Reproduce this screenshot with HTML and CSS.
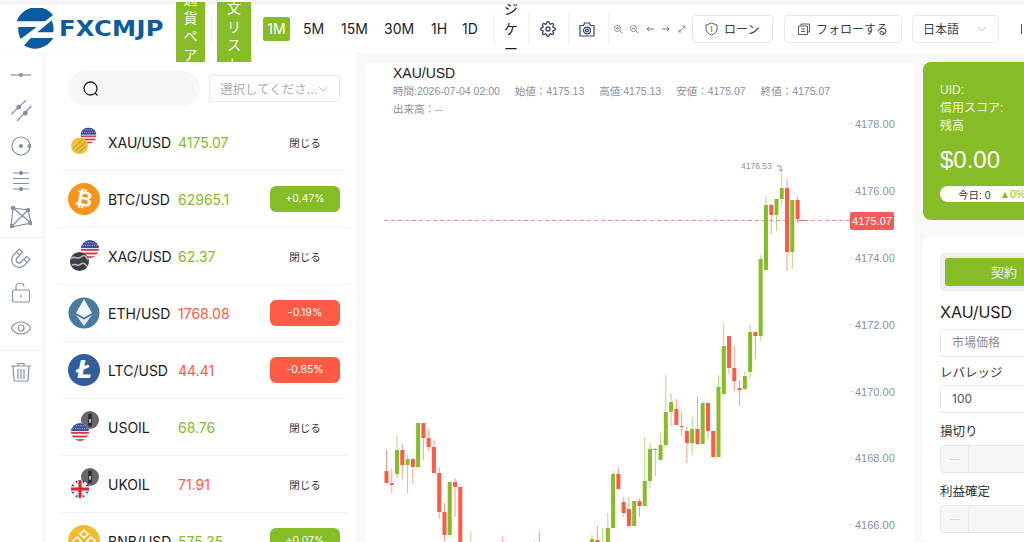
FILE: index.html
```html
<!DOCTYPE html>
<html lang="ja">

<head>
    <meta charset="UTF-8">
    <meta name="viewport" content="width=device-width, initial-scale=1.0">
    <title>FXCMJP</title>
    <link rel="stylesheet" href="styles.css">
</head>

<body>
    <svg class="defs" width="0" height="0">
        <defs>
            <clipPath id="round"><circle cx="10" cy="10" r="10"></circle></clipPath>
            <symbol id="flag-us" viewBox="0 0 20 20">
                <g clip-path="url(#round)">
                    <rect width="20" height="20" fill="#f4f4f6"></rect>
                    <rect y="2" width="20" height="2" fill="#d8384a"></rect>
                    <rect y="6" width="20" height="2" fill="#d8384a"></rect>
                    <rect y="10" width="20" height="2" fill="#d8384a"></rect>
                    <rect y="14" width="20" height="2" fill="#d8384a"></rect>
                    <rect y="18" width="20" height="2" fill="#d8384a"></rect>
                    <rect width="20" height="9" fill="#3f4f9e"></rect>
                    <path d="M3 3h14M2 6h16" stroke="#cfd4ea" stroke-width="1" stroke-dasharray="1 1.5"></path>
                </g>
            </symbol>
            <symbol id="flag-uk" viewBox="0 0 20 20">
                <g clip-path="url(#round)">
                    <rect width="20" height="20" fill="#3b4a94"></rect>
                    <path d="M0 0l20 20M20 0L0 20" stroke="#f4f4f6" stroke-width="4"></path>
                    <path d="M10 0v20M0 10h20" stroke="#f4f4f6" stroke-width="6"></path>
                    <path d="M10 0v20M0 10h20" stroke="#e0242f" stroke-width="3.4"></path>
                </g>
            </symbol>
            <symbol id="gold" viewBox="0 0 20 20">
                <g clip-path="url(#round)">
                    <rect width="20" height="20" fill="#f0c33c"></rect>
                    <path d="M2 13L14 2M5 16L18 5M9 18l9-8" stroke="#c79a2a" stroke-width="1.2"></path>
                    <path d="M0 15c6 5 14 5 20 0v5H0z" fill="#e9e2c4"></path>
                </g>
            </symbol>
            <symbol id="silver" viewBox="0 0 20 20">
                <g clip-path="url(#round)">
                    <rect width="20" height="20" fill="#3d3f42"></rect>
                    <path d="M1 7c4-4 7 2 11-2s6 2 7 3M2 14c3-3 6 2 9-1s5 0 7 2" stroke="#b9bbbe" stroke-width="1.600" fill="none"></path>
                </g>
            </symbol>
            <symbol id="oil" viewBox="0 0 20 20">
                <g clip-path="url(#round)">
                    <rect width="20" height="20" fill="#66676a"></rect>
                    <rect x="8" y="3" width="4" height="14" fill="#2a2b2d"></rect>
                    <rect x="9" y="9" width="2" height="4" fill="#c9cacc"></rect>
                </g>
            </symbol>
        </defs>
    </svg>

    <div class="header">
        <div class="logo">
            <svg class="logo-mark" viewBox="0 0 38 42" fill="#0b5c9e">
                <path d="M.7 13.300A21 21 0 0 1 34 4l3 3-8 6.300z"></path>
                <path d="M2.300 19H20.700L4.700 31A21 21 0 0 1 2.300 19z"></path>
                <path d="M35.700 12.300A21 21 0 0 1 37.300 24.300H21.300z"></path>
                <path d="M14.700 30H37.300A21 21 0 0 1 8 37.500z"></path>
            </svg>
            <span class="logo-text">FXCMJP</span>
        </div>
        <div class="pill-btn pair-btn"><span>通貨ペア</span></div>
        <div class="divider first"></div>
        <div class="pill-btn order-btn"><span>注文リスト</span></div>
        <div class="divider"></div>
        <div class="timeframes">
            <span class="tf active">1M</span>
            <span class="tf">5M</span>
            <span class="tf">15M</span>
            <span class="tf">30M</span>
            <span class="tf">1H</span>
            <span class="tf">1D</span>
        </div>
        <div class="divider tf-end"></div>
        <div class="indicator-btn"><span>インジケーター</span></div>
        <div class="divider"></div>
        <div class="icon-cell gear-cell">
            <svg width="16" height="16" viewBox="0 0 24 24" fill="none" stroke="#34466e" stroke-width="2">
                <circle cx="12" cy="12" r="3"></circle>
                <path d="M19.4 15a1.65 1.65 0 0 0 .33 1.82l.06.06a2 2 0 0 1 0 2.83 2 2 0 0 1-2.83 0l-.06-.06a1.65 1.65 0 0 0-1.82-.33 1.65 1.65 0 0 0-1 1.51V21a2 2 0 0 1-2 2 2 2 0 0 1-2-2v-.09A1.65 1.65 0 0 0 9 19.4a1.65 1.65 0 0 0-1.82.33l-.06.06a2 2 0 0 1-2.83 0 2 2 0 0 1 0-2.83l.06-.06a1.65 1.65 0 0 0 .33-1.82 1.65 1.65 0 0 0-1.51-1H3a2 2 0 0 1-2-2 2 2 0 0 1 2-2h.09A1.65 1.65 0 0 0 4.6 9a1.65 1.65 0 0 0-.33-1.82l-.06-.06a2 2 0 0 1 0-2.83 2 2 0 0 1 2.83 0l.06.06a1.65 1.65 0 0 0 1.82.33H9a1.65 1.65 0 0 0 1-1.51V3a2 2 0 0 1 2-2 2 2 0 0 1 2 2v.09a1.65 1.65 0 0 0 1 1.51 1.65 1.65 0 0 0 1.82-.33l.06-.06a2 2 0 0 1 2.83 0 2 2 0 0 1 0 2.83l-.06.06a1.65 1.65 0 0 0-.33 1.82V9a1.65 1.65 0 0 0 1.51 1H21a2 2 0 0 1 2 2 2 2 0 0 1-2 2h-.09a1.65 1.65 0 0 0-1.51 1z"></path>
            </svg>
        </div>
        <div class="divider"></div>
        <div class="icon-cell camera-cell">
            <svg width="16" height="16" viewBox="0 0 16 16" fill="none" stroke="#34466e" stroke-width="1.2">
                <path d="M1 4.5h3.5L5.5 2h5l1 2.5H15V15H1z" stroke-linejoin="round"></path>
                <circle cx="8" cy="9.5" r="3.4"></circle>
                <circle cx="8" cy="9.5" r="1.4"></circle>
            </svg>
        </div>
        <div class="divider"></div>
        <div class="chart-tools">
            <svg width="8" height="8" viewBox="0 0 8 8" fill="none" stroke="#8a8f99"><circle cx="3.5" cy="3.5" r="3"></circle><path d="M6 6l2 2M2 3.5h3M3.5 2v3"></path></svg>
            <svg width="8" height="8" viewBox="0 0 8 8" fill="none" stroke="#8a8f99"><circle cx="3.5" cy="3.5" r="3"></circle><path d="M6 6l2 2M2 3.5h3"></path></svg>
            <svg width="8" height="8" viewBox="0 0 8 8" fill="none" stroke="#6f7580"><path d="M8 4H1M3 2L1 4l2 2"></path></svg>
            <svg width="8" height="8" viewBox="0 0 8 8" fill="none" stroke="#6f7580"><path d="M0 4h7M5 2l2 2-2 2"></path></svg>
            <svg width="8" height="8" viewBox="0 0 8 8" fill="none" stroke="#8a8f99"><path d="M1 7l6-6M4.5 1H7v2.5M1 4.500V7h2.500"></path></svg>
        </div>
        <div class="head-btn loan-btn">
            <svg width="13" height="14" viewBox="0 0 13 14" fill="none" stroke="#59616e"><path d="M6.500 1l5.500 2v4c0 3-2.500 5-5.500 6C3.500 12 1 10 1 7V3z"></path><path d="M6.500 4v6" stroke="#86bc25" stroke-width="1.500"></path></svg>
            <span>ローン</span>
        </div>
        <div class="head-btn follow-btn">
            <svg width="12" height="12" viewBox="0 0 12 12" fill="none" stroke="#59616e"><path d="M3 3V1h8.500v8H9.500M.5 3h9v8.500h-9zM3 6h4M3 8.500h4"></path></svg>
            <span>フォローする</span>
        </div>
        <div class="head-btn lang-btn">
            <span>日本語</span>
            <svg width="10" height="6" viewBox="0 0 10 6" fill="none" stroke="#c4c8d0"><path d="M1 1l4 4 4-4"></path></svg>
        </div>
        <div class="head-edge"></div>
    </div>

    <div class="main">
        <div class="toolbar">
            <svg class="tool" width="20" height="20" viewBox="0 0 20 20" fill="none" stroke="#8490a5" stroke-width="1.200"><path d="M0 10h20"></path><circle cx="10" cy="10" r="1.500" fill="#8490a5"></circle></svg>
            <svg class="tool" width="21" height="21" viewBox="0 0 21 21" fill="none" stroke="#8490a5" stroke-width="1.200"><path d="M.3 14.300L15 .3M6 21L20.300 6"></path><circle cx="7.700" cy="7.200" r="1.800" fill="#8490a5"></circle><circle cx="14.300" cy="13.200" r="1.800" fill="#8490a5"></circle></svg>
            <svg class="tool" width="20" height="20" viewBox="0 0 20 20" fill="none" stroke="#8490a5" stroke-width="1.200"><circle cx="10" cy="10" r="9"></circle><circle cx="10" cy="10" r="1.500" fill="#8490a5"></circle><circle cx="18.500" cy="10" r="1.500" fill="#8490a5"></circle></svg>
            <svg class="tool" width="20" height="20" viewBox="0 0 20 20" fill="none" stroke="#8490a5" stroke-width="1.200"><path d="M2 2h16M2 7.500h16M2 12.500h16M2 18h16"></path><circle cx="10" cy="2" r="1.500" fill="#8490a5"></circle><circle cx="10" cy="18" r="1.500" fill="#8490a5"></circle></svg>
            <svg class="tool" width="22" height="22" viewBox="0 0 22 22" fill="none" stroke="#8490a5" stroke-width="1.200"><path d="M3 2l15 2 3 13-20 4zM3 2l18 15M18 4L1 21"></path><circle cx="3" cy="2" r="1.700" fill="#8490a5"></circle><circle cx="18" cy="4" r="1.700" fill="#8490a5"></circle><circle cx="20.300" cy="17" r="1.700" fill="#8490a5"></circle><circle cx="1.700" cy="20.300" r="1.700" fill="#8490a5"></circle></svg>
            <div class="tool-line"></div>
            <svg class="tool" width="20" height="20" viewBox="0 0 20 20" fill="none" stroke="#8490a5" stroke-width="1.200"><path d="M8.400 1L2.700 6.700A7.500 7.500 0 0 0 13.300 17.300L19 11.600 15.700 8.300 10 14A2.800 2.800 0 0 1 6 10L11.700 4.300z"></path><path d="M5.500 3.900l3.300 3.300M16.100 14.500l-3.300-3.300"></path></svg>
            <svg class="tool" width="20" height="20" viewBox="0 0 20 20" fill="none" stroke="#8490a5" stroke-width="1.200"><rect x="1.500" y="7" width="17" height="12" rx="1.500"></rect><path d="M5 7V4.500a4 4 0 0 1 8-1M10 11.500v3"></path></svg>
            <svg class="tool" width="20" height="20" viewBox="0 0 20 20" fill="none" stroke="#8490a5" stroke-width="1.200"><path d="M0 10c5-8 15-8 20 0-5 8-15 8-20 0z"></path><circle cx="10" cy="10" r="3"></circle></svg>
            <div class="tool-line low"></div>
            <svg class="tool" width="20" height="20" viewBox="0 0 20 20" fill="none" stroke="#8490a5" stroke-width="1.200"><path d="M0 4h20M7 4V1.500h6V4M2 4l1 14q0 1 1 1h12q1 0 1-1l1-14M7 7v10M10 7v10M13 7v10"></path></svg>
        </div>

        <div class="list-panel">
            <div class="list-top">
                <div class="search">
                    <svg width="16" height="16" viewBox="0 0 16 16" fill="none" stroke="#222" stroke-width="1.300"><circle cx="7.500" cy="7.500" r="6.500"></circle><path d="M12 12l2.500 2.500"></path></svg>
                </div>
                <div class="select">
                    <span>選択してくださ...</span>
                    <svg width="10" height="6" viewBox="0 0 10 6" fill="none" stroke="#b9bdc6"><path d="M1 1l4 4 4-4"></path></svg>
                </div>
            </div>

            <div class="row">
                <svg class="coin" viewBox="0 0 36 36"><use href="#flag-us" x="14.500" y="3.500" width="16" height="16"></use><use href="#gold" x="5" y="13.500" width="17" height="17"></use></svg>
                <span class="symbol">XAU/USD</span>
                <span class="price up">4175.07</span>
                <span class="closed">閉じる</span>
            </div>
            <div class="row">
                <svg class="coin" viewBox="0 0 36 36"><circle cx="18" cy="18" r="16" fill="#f7931a"></circle><text x="18" y="25" text-anchor="middle" class="coin-glyph" transform="rotate(12 18 18)">₿</text></svg>
                <span class="symbol">BTC/USD</span>
                <span class="price up">62965.1</span>
                <span class="badge up-bg">+0.47%</span>
            </div>
            <div class="row">
                <svg class="coin" viewBox="0 0 36 36"><use href="#flag-us" x="15" y="2" width="18" height="18"></use><use href="#silver" x="4" y="14" width="19" height="19"></use></svg>
                <span class="symbol">XAG/USD</span>
                <span class="price up">62.37</span>
                <span class="closed">閉じる</span>
            </div>
            <div class="row">
                <svg class="coin" viewBox="0 0 36 36"><circle cx="18" cy="18" r="15.500" fill="#4a7a9c"></circle><path d="M18 4l8 14-8 4.500-8-4.500z" fill="#f2f6f9"></path><path d="M10 20l8 4.500 8-4.500-8 11z" fill="#dfe8ee"></path></svg>
                <span class="symbol">ETH/USD</span>
                <span class="price down">1768.08</span>
                <span class="badge down-bg">-0.19%</span>
            </div>
            <div class="row">
                <svg class="coin" viewBox="0 0 36 36"><circle cx="18" cy="18" r="16" fill="#345d9d"></circle><text x="18" y="26" text-anchor="middle" class="coin-glyph ltc">Ł</text></svg>
                <span class="symbol">LTC/USD</span>
                <span class="price down">44.41</span>
                <span class="badge down-bg">-0.85%</span>
            </div>
            <div class="row">
                <svg class="coin" viewBox="0 0 36 36"><use href="#oil" x="15" y="2" width="18" height="18"></use><use href="#flag-us" x="5" y="14" width="18" height="18"></use></svg>
                <span class="symbol">USOIL</span>
                <span class="price up">68.76</span>
                <span class="closed">閉じる</span>
            </div>
            <div class="row">
                <svg class="coin" viewBox="0 0 36 36"><use href="#oil" x="15" y="2" width="18" height="18"></use><use href="#flag-uk" x="5" y="14" width="18" height="18"></use></svg>
                <span class="symbol">UKOIL</span>
                <span class="price down">71.91</span>
                <span class="closed">閉じる</span>
            </div>
            <div class="row">
                <svg class="coin" viewBox="0 0 36 36"><circle cx="18" cy="18" r="16" fill="#f3ba2f"></circle><path d="M18 7l4 4-4 4-4-4zM11 14l4 4-4 4-4-4zM25 14l4 4-4 4-4-4zM18 21l4 4-4 4-4-4z" fill="none" stroke="#fff" stroke-width="1.500"></path></svg>
                <span class="symbol">BNB/USD</span>
                <span class="price up">575.35</span>
                <span class="badge up-bg">+0.07%</span>
            </div>
        </div>

        <div class="chart-panel">
            <div class="chart-info">
                <div class="chart-title">XAU/USD</div>
                <div class="chart-stats">
                    <span>時間:2026-07-04 02:00</span>
                    <span>始値：4175.13</span>
                    <span>高値:4175.13</span>
                    <span>安値：4175.07</span>
                    <span>終値：4175.07</span>
                    <span>出来高：--</span>
                </div>
            </div>
            <svg id="chart" class="chart-canvas" viewBox="365 62 550 480"></svg>
        </div>

        <div class="side">
            <div class="account">
                <div class="account-line">UID:</div>
                <div class="account-line">信用スコア:</div>
                <div class="account-line">残高</div>
                <div class="balance">$0.00</div>
                <div class="today"><b>今日: 0</b><span class="today-up">▲0%</span></div>
            </div>
            <div class="trade">
                <div class="trade-tabs"><div class="trade-tab">契約</div></div>
                <div class="trade-symbol">XAU/USD</div>
                <div class="field">市場価格</div>
                <div class="trade-label first">レバレッジ</div>
                <div class="field dark">100</div>
                <div class="trade-label">損切り</div>
                <div class="field off"><span class="off-minus">—</span></div>
                <div class="trade-label">利益確定</div>
                <div class="field off"><span class="off-minus">—</span></div>
            </div>
        </div>
    </div>

    <script src="chart.js"></script>
</body>

</html>
```

FILE: styles.css
```css
:root {
    --green: #86bc25;
    --red: #ff5a43;
    --line: #e6e8f0;
    --page: #f8f8fa;
}

* {
    margin: 0;
    padding: 0;
    box-sizing: border-box;
}

html,
body {
    width: 1024px;
    height: 542px;
    overflow: hidden;
}

body {
    font-family: Inter, "Noto Sans CJK JP", sans-serif;
    background-color: var(--page);
    color: #1c1c1e;
    padding-top: 3px;
}

.defs {
    position: absolute;
}

.header {
    display: flex;
    align-items: center;
    height: 50px;
    padding-left: 16px;
    background: #fff;
    border-top: 1px solid #eeeef8;
    white-space: nowrap;
    position: relative;
    z-index: 2;
}

.logo {
    display: flex;
    align-items: center;
    width: 147px;
}

.logo-mark {
    width: 38px;
    height: 42px;
    flex: none;
}

.logo-text {
    display: inline-block;
    margin-left: 5px;
    font-family: "DejaVu Sans", sans-serif;
    font-weight: 700;
    font-size: 22px;
    letter-spacing: 0.3px;
    color: #0b5c9e;
    transform: scaleX(1.1);
    transform-origin: left center;
}

.pill-btn {
    display: flex;
    align-items: center;
    align-self: flex-start;
    height: 60px;
    margin-top: -2px;
    padding-bottom: 10px;
    background: var(--green);
    color: #fff;
    font-size: 14px;
    line-height: 18.5px;
    white-space: normal;
    text-align: center;
    overflow: hidden;
}

.pair-btn {
    width: 29px;
    margin-left: 13px;
    padding-left: 7px;
    padding-right: 7px;
}

.order-btn {
    width: 34px;
    margin-left: 5px;
    padding-left: 10px;
    padding-right: 10px;
}

.divider {
    width: 1px;
    height: 33px;
    background: #f1f1f4;
    flex: none;
}

.divider.first {
    margin-left: 6px;
}

.order-btn + .divider {
    margin-left: 6px;
}

.timeframes {
    display: flex;
    align-items: center;
    margin-left: 5px;
    font-size: 14px;
    color: #222;
}

.tf {
    margin-right: 13px;
    line-height: 24px;
}

.tf:nth-child(2) {
    width: 20px;
    margin-right: 18px;
}

.tf:nth-child(3) {
    width: 25px;
    margin-right: 18px;
}

.tf:nth-child(4) {
    width: 28px;
    margin-right: 19px;
}

.tf:nth-child(5) {
    width: 14px;
    margin-right: 17px;
}

.tf:nth-child(6) {
    width: 15px;
    margin-right: 0;
}

.tf.active {
    width: 27px;
    text-align: center;
    color: #fff;
    background: var(--green);
    border-radius: 2px;
}

.divider.tf-end {
    margin-left: 16px;
}

.indicator-btn {
    display: flex;
    align-items: center;
    width: 34px;
    height: 50px;
    padding: 0 10px;
    font-size: 14px;
    line-height: 20px;
    white-space: normal;
    overflow: hidden;
}

.icon-cell {
    display: flex;
    justify-content: center;
    width: 39px;
}

.gear-cell {
    padding-right: 2px;
}

.camera-cell {
    padding-right: 4px;
}

.chart-tools {
    display: flex;
    align-items: center;
    gap: 8px;
    margin-left: 5px;
}

.head-btn {
    display: flex;
    align-items: center;
    height: 28px;
    border: 1px solid var(--line);
    border-radius: 4px;
    font-size: 12px;
    color: #3c4048;
}

.loan-btn {
    width: 81px;
    margin-left: 6px;
    padding-left: 12px;
    gap: 6px;
}

.follow-btn {
    width: 118px;
    margin-left: 11px;
    padding-left: 13px;
    gap: 6px;
}

.lang-btn {
    width: 87px;
    margin-left: 10px;
    padding-left: 10px;
    gap: 18px;
}

.head-edge {
    width: 1px;
    height: 10px;
    margin-left: 22px;
    background: #555;
}

.main {
    display: flex;
    align-items: flex-start;
    margin-top: 1px;
}

.toolbar {
    display: flex;
    flex-direction: column;
    align-items: center;
    width: 42px;
    height: 488px;
    padding-top: 11px;
    background: #fff;
    flex: none;
}

.tool {
    display: block;
    margin-bottom: 15px;
    flex: none;
}

.tool-line {
    width: 42px;
    height: 1px;
    margin: -6px 0 10px;
    background: #eeeef2;
    flex: none;
}

.tool-line.low {
    margin: -3px 0 11px;
}

.list-panel {
    width: 310px;
    height: 488px;
    margin-left: 4px;
    padding-top: 17px;
    background: #fff;
    overflow: hidden;
    flex: none;
}

.list-top {
    display: flex;
    align-items: center;
    gap: 9px;
    margin: 0 0 8px 22px;
}

.search {
    display: flex;
    align-items: center;
    width: 132px;
    height: 35px;
    padding-left: 15px;
    background: #f6f6f7;
    border-radius: 18px;
}

.select {
    display: flex;
    align-items: center;
    justify-content: space-between;
    width: 131px;
    height: 27px;
    padding: 0 11px 0 10px;
    border: 1px solid var(--line);
    border-radius: 3px;
    font-size: 12.5px;
    color: #a9adb5;
}

.row {
    display: flex;
    align-items: center;
    height: 57px;
    margin: 0 7px 0 14px;
    padding: 0 9px 0 6px;
    border-bottom: 1px solid #f2f2f4;
}

.coin {
    width: 36px;
    height: 36px;
    margin-right: 6px;
    flex: none;
}

.coin-glyph {
    font-family: "DejaVu Sans", sans-serif;
    font-weight: 700;
    font-size: 21px;
    fill: #fff;
}

.coin-glyph.ltc {
    font-size: 24px;
    font-style: italic;
}

.symbol {
    width: 70px;
    font-size: 14px;
    flex: none;
}

.price {
    font-size: 14px;
}

.up {
    color: var(--green);
}

.down {
    color: var(--red);
}

.closed {
    width: 70px;
    margin-left: auto;
    text-align: center;
    font-size: 10.500px;
    color: #333;
}

.badge {
    width: 70px;
    height: 26px;
    margin-left: auto;
    border-radius: 6px;
    text-align: center;
    line-height: 26px;
    font-size: 10.500px;
    color: #fff;
}

.up-bg {
    background: var(--green);
}

.down-bg {
    background: var(--red);
}

.chart-panel {
    position: relative;
    width: 550px;
    height: 480px;
    margin: 8px 0 0 9px;
    background: #fff;
    border-radius: 8px 8px 0 0;
    font-family: "Liberation Sans", "Noto Sans CJK JP", sans-serif;
    flex: none;
}

.chart-info {
    padding: 2px 0 0 28px;
}

.chart-title {
    font-size: 14px;
    line-height: 18px;
    color: #222;
}

.chart-stats {
    display: flex;
    flex-wrap: wrap;
    gap: 3px 15px;
    width: 450px;
    margin-top: 2px;
    font-size: 10.500px;
    line-height: 15px;
    color: #8a8f99;
}

.chart-canvas {
    position: absolute;
    top: 0;
    left: 0;
    width: 550px;
    height: 480px;
}

.axis-label {
    font-size: 11px;
    fill: #8a93a3;
}

.price-tag {
    font-size: 11px;
    fill: #fff;
}

.high-label {
    font-size: 8.500px;
    fill: #8a93a3;
}

.side {
    width: 240px;
    margin: 8px 0 0 8px;
    flex: none;
}

.account {
    height: 158px;
    padding: 19px 0 0 17px;
    background: var(--green);
    border-radius: 8px;
    color: #fff;
    font-family: "Liberation Sans", "Noto Sans CJK JP", sans-serif;
}

.account-line {
    font-size: 12px;
    line-height: 18px;
    color: #f1f7e4;
}

.balance {
    margin-top: 11px;
    font-size: 24px;
    line-height: 28px;
}

.today {
    display: flex;
    align-items: center;
    gap: 9px;
    width: 180px;
    height: 16px;
    margin-top: 12px;
    padding-left: 18px;
    background: #fff;
    border-radius: 8px;
    font-size: 10.500px;
    color: #333;
}

.today b {
    font-weight: 400;
}

.today-up {
    color: var(--green);
}

.trade {
    height: 306px;
    margin-top: 16px;
    padding: 17px 0 0 17px;
    background: #fff;
    border-radius: 8px;
}

.trade-tabs {
    padding: 5px;
    background: #eeeef0;
    border-radius: 4px;
}

.trade-tab {
    width: 118px;
    height: 28px;
    background: var(--green);
    border-radius: 3px;
    text-align: center;
    line-height: 28px;
    font-size: 13px;
    color: #f4f8e8;
}

.trade-symbol {
    margin-top: 10px;
    font-size: 16px;
    line-height: 22px;
}

.field {
    height: 28px;
    margin-top: 6px;
    padding-left: 11px;
    border: 1px solid var(--line);
    border-radius: 4px;
    line-height: 26px;
    font-size: 12px;
    color: #8b8f97;
}

.field.dark {
    margin-top: 3px;
    color: #555;
}

.field.off {
    margin-top: 4px;
    padding-left: 0;
    background: #f5f6f8;
}

.off-minus {
    display: block;
    width: 28px;
    height: 26px;
    border-right: 1px solid var(--line);
    text-align: center;
    font-size: 10px;
    color: #cfd2d8;
}

.trade-label {
    margin-top: 10px;
    font-size: 12.500px;
    line-height: 18px;
    color: #333;
}

.trade-label.first {
    margin-top: 7px;
}
```

FILE: chart.js
```js
const svg = document.getElementById("chart");
const NS = "http://www.w3.org/2000/svg";

const GREEN = "#86bc25";
const RED = "#ff5a43";
const GRAY = "#8a93a3";

// index, colour, high, low, body top, body bottom (page pixels)
const candles = [
    [0, "r", 450, 483, 471, 483], [1, "r", 469, 493, 483, 485], [2, "g", 436, 478, 450, 474],
    [3, "r", 444, 479, 450, 465], [4, "g", 455, 493, 459, 465], [5, "r", 459, 484, 459, 467],
    [6, "g", 423, 467, 423, 467], [7, "r", 423, 460, 423, 438], [8, "r", 429, 451, 438, 447],
    [9, "r", 440, 473, 447, 473], [10, "r", 467, 519, 473, 512], [11, "r", 503, 541, 512, 535],
    [12, "g", 482, 537, 482, 535], [13, "r", 478, 517, 482, 487], [14, "r", 487, 560, 487, 560],
    [16, "g", 531, 560, 560, 560], [22, "r", 537, 560, 560, 560], [28, "g", 541, 560, 560, 560],
    [29, "r", 531, 560, 560, 560], [39, "g", 535, 560, 539, 560], [40, "r", 525, 560, 540, 560],
    [41, "g", 528, 560, 560, 560], [42, "g", 513, 560, 528, 560], [43, "g", 471, 528, 474, 528],
    [44, "r", 467, 489, 474, 489], [45, "r", 497, 517, 502, 513], [46, "r", 497, 526, 509, 526],
    [47, "g", 501, 526, 501, 526], [48, "r", 498, 517, 501, 506], [49, "g", 437, 506, 481, 506],
    [50, "g", 443, 488, 449, 481], [51, "n", 448, 476, 449, 450], [52, "g", 433, 461, 445, 460],
    [53, "g", 375, 445, 412, 445], [54, "g", 393, 426, 402, 412], [55, "r", 399, 425, 409, 425],
    [56, "r", 412, 436, 426, 427], [57, "r", 427, 463, 431, 443], [58, "g", 417, 455, 429, 443],
    [59, "r", 396, 445, 429, 444], [60, "g", 401, 444, 403, 444], [61, "r", 403, 439, 403, 431],
    [62, "r", 431, 457, 431, 457], [63, "g", 375, 457, 387, 457], [64, "g", 323, 394, 346, 394],
    [65, "r", 336, 374, 336, 368], [66, "r", 346, 391, 368, 381], [67, "r", 380, 406, 388, 390],
    [68, "g", 371, 389, 376, 389], [69, "g", 325, 378, 332, 372], [70, "r", 332, 359, 332, 336],
    [71, "g", 255, 341, 259, 336], [72, "g", 196, 270, 205, 270], [73, "r", 203, 234, 205, 215],
    [74, "g", 199, 231, 199, 215], [75, "g", 173, 205, 188, 199], [76, "r", 179, 271, 188, 252],
    [77, "g", 200, 269, 200, 252], [78, "r", 197, 223, 200, 219], [79, "r", 220, 221, 220, 221]
];

const axis = [[4178, 123.5], [4176, 190.5], [4174, 257.5], [4172, 324.5], [4170, 391.5], [4168, 457.5], [4166, 524.5]];

function add(tag, attrs, text) {
    const el = document.createElementNS(NS, tag);
    for (const key in attrs) el.setAttribute(key, attrs[key]);
    if (text) el.textContent = text;
    svg.appendChild(el);
    return el;
}

// Last price line
add("line", { x1: 384, x2: 850, y1: 220.5, y2: 220.5, stroke: "#f78f88", "stroke-dasharray": "4 3" });

candles.forEach(([i, c, high, low, top, bottom]) => {
    const color = c === "g" ? GREEN : c === "r" ? RED : GRAY;
    const x = 386.5 + i * 5.27;
    add("rect", { x: x - 0.5, y: high, width: 1, height: low - high, fill: color, opacity: 0.6 });
    add("rect", { x: x - 2, y: top, width: 4, height: Math.max(bottom - top, 1), fill: color });
});

axis.forEach(([value, y]) => {
    add("line", { x1: 850, x2: 853, y1: y, y2: y, stroke: "#d8dbe2" });
    add("text", { x: 855, y: y + 4, class: "axis-label" }, value.toFixed(2));
});

// Price tag on the axis
add("rect", { x: 850, y: 212, width: 44, height: 18, rx: 2, fill: "#f55a5a" });
add("text", { x: 872, y: 225, "text-anchor": "middle", class: "price-tag" }, "4175.07");

// Highest price marker
add("text", { x: 741, y: 169, class: "high-label" }, "4176.53");
add("path", { d: "M777 166h4v5M779.500 169.500l1.500 2 1.500-2", fill: "none", stroke: GRAY });
```
